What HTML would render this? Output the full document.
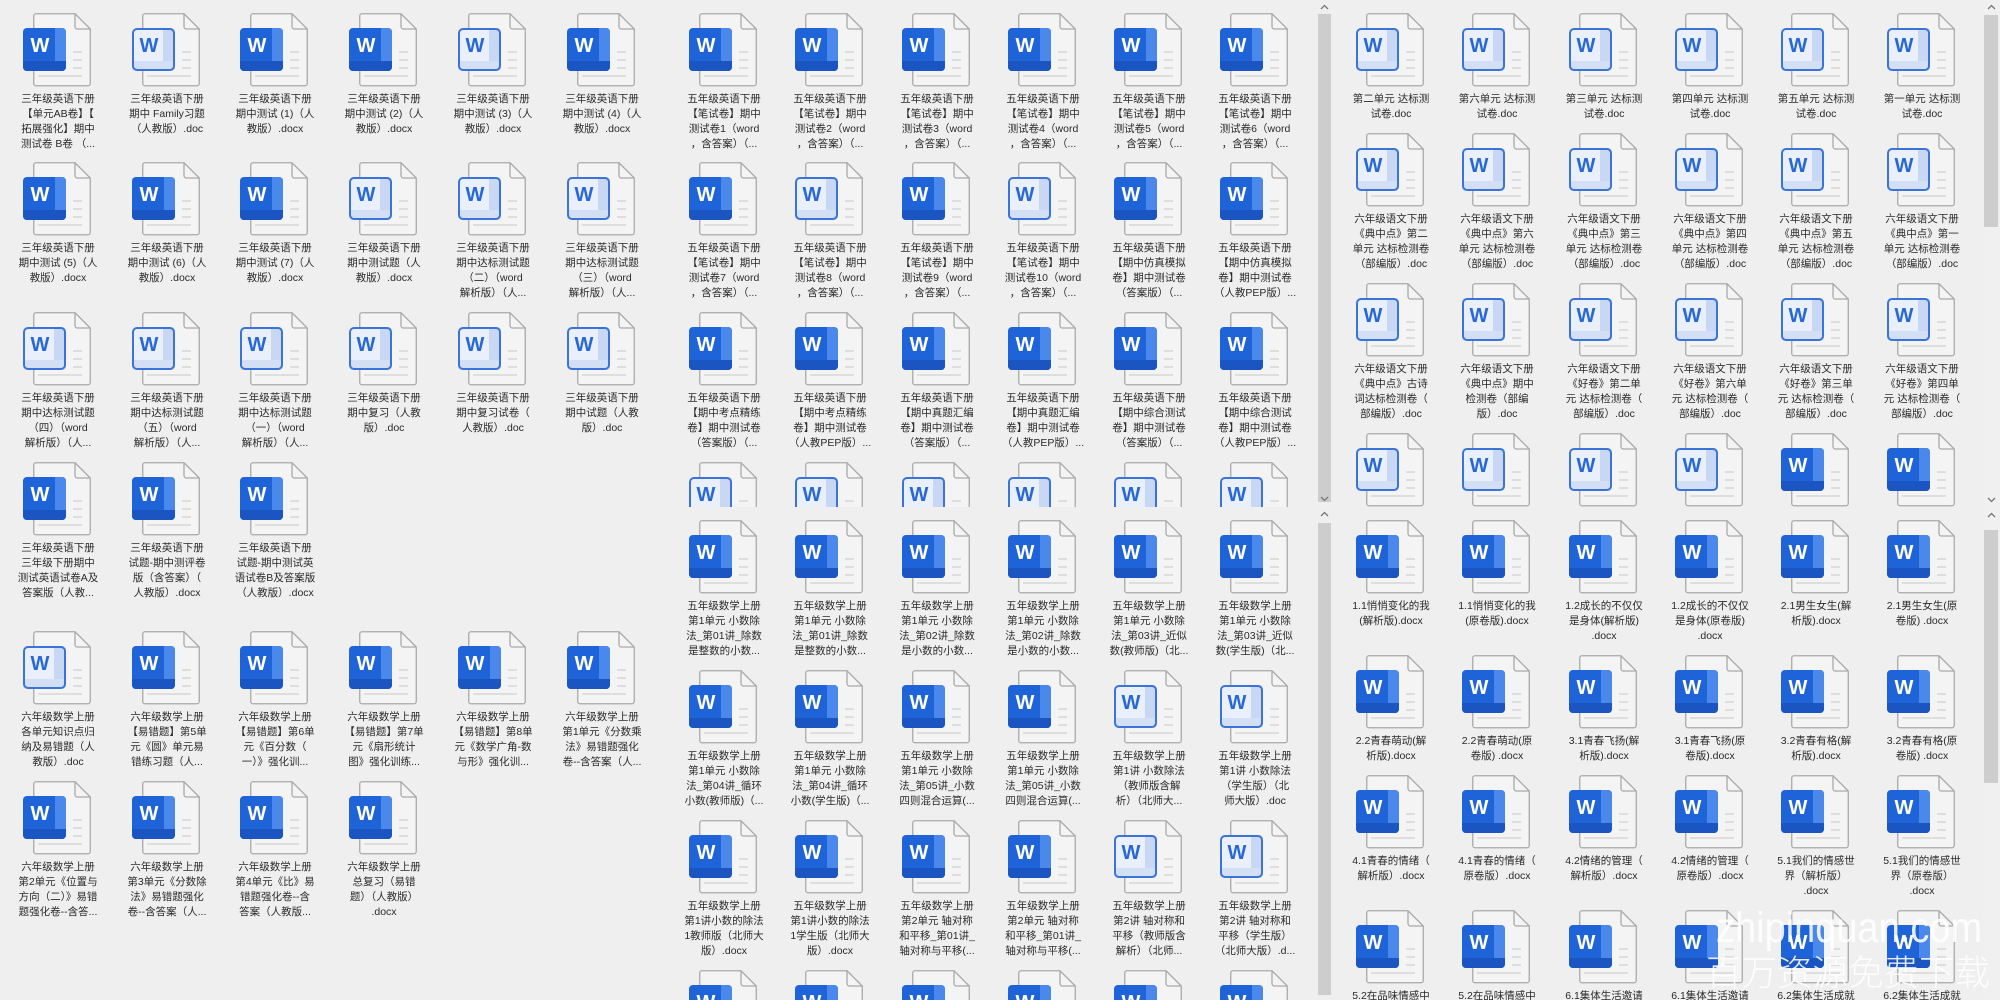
<!DOCTYPE html>
<html><head><meta charset="utf-8">
<style>
*{margin:0;padding:0;box-sizing:border-box}
html,body{width:2000px;height:1000px;overflow:hidden;background:#efefef}
body{position:relative;font-family:"Liberation Sans","Noto Sans CJK SC",sans-serif}
.c{position:absolute;overflow:hidden}
.i{position:absolute;width:90px}
.i svg{position:absolute;left:10px;top:0;width:70px;height:75px}
.i p{position:absolute;left:-10px;top:79px;width:110px;text-align:center;font-size:10.5px;line-height:15px;color:#2a2a2a;white-space:nowrap}
.sb{position:absolute;background:#cdcdcd}
.wm1{position:absolute;left:1716px;top:904px;font-size:38px;line-height:44px;color:rgba(255,255,255,.88);font-family:"Liberation Sans",sans-serif;white-space:nowrap;transform:scaleY(1.12);transform-origin:left top}
.wm2{position:absolute;left:1706px;top:950px;font-size:35.5px;line-height:42px;color:rgba(255,255,255,.88);font-family:"Noto Sans CJK SC",sans-serif;font-weight:300;white-space:nowrap}
</style></head><body>
<svg width="0" height="0" style="position:absolute">
<defs>
<clipPath id="cp"><rect x="0" y="15" width="43" height="43" rx="4"/></clipPath>
<symbol id="S" viewBox="0 0 70 75">
<path d="M10.75 3a2.25 2.25 0 0 1 2.25-2.25H52L67.25 16V70.5a2.25 2.25 0 0 1-2.25 2.25H13a2.25 2.25 0 0 1-2.25-2.25Z" fill="#f4f4f4" stroke="#a9a9a9" stroke-width="1.3"/>
<path d="M52 .75V13.5a2.5 2.5 0 0 0 2.5 2.5H67.25" fill="none" stroke="#a9a9a9" stroke-width="1.3"/>
<path d="M50 39h9M50 47h9M50 55h9M15 63h44" stroke="#d6d6d6" stroke-width="1.6"/>
<g clip-path="url(#cp)"><rect x="0" y="15" width="43" height="43" fill="#1f63d8"/><rect x="32" y="15" width="11" height="43" fill="#4a88ec"/><rect x="0" y="48" width="43" height="10" fill="#1a55c2"/></g>
<text x="17" y="39" font-family="Liberation Sans" font-weight="bold" font-size="20" fill="#fff" text-anchor="middle">W</text>
</symbol>
<symbol id="L" viewBox="0 0 70 75">
<path d="M10.75 3a2.25 2.25 0 0 1 2.25-2.25H52L67.25 16V70.5a2.25 2.25 0 0 1-2.25 2.25H13a2.25 2.25 0 0 1-2.25-2.25Z" fill="#f4f4f4" stroke="#a9a9a9" stroke-width="1.3"/>
<path d="M52 .75V13.5a2.5 2.5 0 0 0 2.5 2.5H67.25" fill="none" stroke="#a9a9a9" stroke-width="1.3"/>
<path d="M50 39h9M50 47h9M50 55h9M15 63h44" stroke="#d6d6d6" stroke-width="1.6"/>
<g clip-path="url(#cp)"><rect x="0" y="15" width="43" height="43" fill="#eaf0fb"/><rect x="31" y="15" width="12" height="43" fill="#c8d8f4"/><rect x="0" y="48" width="43" height="10" fill="#d3dff4"/></g>
<rect x="1" y="16" width="41" height="41" rx="4" fill="none" stroke="#3b74d8" stroke-width="2"/>
<text x="17" y="39" font-family="Liberation Sans" font-weight="bold" font-size="20" fill="#2767d6" text-anchor="middle">W</text>
</symbol>
</defs></svg>

<!-- Panel 1 -->
<div class="c" style="left:0;top:0;width:670px;height:1000px">
<div class="i" style="left:13px;top:13px"><svg><use href="#S"/></svg><p>三年级英语下册<br>【单元AB卷】【<br>拓展强化】期中<br>测试卷 B卷 （...</p></div>
<div class="i" style="left:122px;top:13px"><svg><use href="#L"/></svg><p>三年级英语下册<br>期中 Family习题<br>（人教版）.doc</p></div>
<div class="i" style="left:230px;top:13px"><svg><use href="#S"/></svg><p>三年级英语下册<br>期中测试 (1)（人<br>教版）.docx</p></div>
<div class="i" style="left:339px;top:13px"><svg><use href="#S"/></svg><p>三年级英语下册<br>期中测试 (2)（人<br>教版）.docx</p></div>
<div class="i" style="left:448px;top:13px"><svg><use href="#L"/></svg><p>三年级英语下册<br>期中测试 (3)（人<br>教版）.docx</p></div>
<div class="i" style="left:557px;top:13px"><svg><use href="#S"/></svg><p>三年级英语下册<br>期中测试 (4)（人<br>教版）.docx</p></div>

<div class="i" style="left:13px;top:162px"><svg><use href="#S"/></svg><p>三年级英语下册<br>期中测试 (5)（人<br>教版）.docx</p></div>
<div class="i" style="left:122px;top:162px"><svg><use href="#S"/></svg><p>三年级英语下册<br>期中测试 (6)（人<br>教版）.docx</p></div>
<div class="i" style="left:230px;top:162px"><svg><use href="#S"/></svg><p>三年级英语下册<br>期中测试 (7)（人<br>教版）.docx</p></div>
<div class="i" style="left:339px;top:162px"><svg><use href="#L"/></svg><p>三年级英语下册<br>期中测试题（人<br>教版）.docx</p></div>
<div class="i" style="left:448px;top:162px"><svg><use href="#L"/></svg><p>三年级英语下册<br>期中达标测试题<br>（二）（word<br>解析版）（人...</p></div>
<div class="i" style="left:557px;top:162px"><svg><use href="#L"/></svg><p>三年级英语下册<br>期中达标测试题<br>（三）（word<br>解析版）（人...</p></div>

<div class="i" style="left:13px;top:312px"><svg><use href="#L"/></svg><p>三年级英语下册<br>期中达标测试题<br>（四）（word<br>解析版）（人...</p></div>
<div class="i" style="left:122px;top:312px"><svg><use href="#L"/></svg><p>三年级英语下册<br>期中达标测试题<br>（五）（word<br>解析版）（人...</p></div>
<div class="i" style="left:230px;top:312px"><svg><use href="#L"/></svg><p>三年级英语下册<br>期中达标测试题<br>（一）（word<br>解析版）（人...</p></div>
<div class="i" style="left:339px;top:312px"><svg><use href="#L"/></svg><p>三年级英语下册<br>期中复习（人教<br>版）.doc</p></div>
<div class="i" style="left:448px;top:312px"><svg><use href="#L"/></svg><p>三年级英语下册<br>期中复习试卷（<br>人教版）.doc</p></div>
<div class="i" style="left:557px;top:312px"><svg><use href="#L"/></svg><p>三年级英语下册<br>期中试题（人教<br>版）.doc</p></div>

<div class="i" style="left:13px;top:462px"><svg><use href="#S"/></svg><p>三年级英语下册<br>三年级下册期中<br>测试英语试卷A及<br>答案版（人教...</p></div>
<div class="i" style="left:122px;top:462px"><svg><use href="#S"/></svg><p>三年级英语下册<br>试题-期中测评卷<br>版（含答案）（<br>人教版）.docx</p></div>
<div class="i" style="left:230px;top:462px"><svg><use href="#S"/></svg><p>三年级英语下册<br>试题-期中测试英<br>语试卷B及答案版<br>（人教版）.docx</p></div>

<div class="i" style="left:13px;top:631px"><svg><use href="#L"/></svg><p>六年级数学上册<br>各单元知识点归<br>纳及易错题（人<br>教版）.doc</p></div>
<div class="i" style="left:122px;top:631px"><svg><use href="#S"/></svg><p>六年级数学上册<br>【易错题】第5单<br>元《圆》单元易<br>错练习题（人...</p></div>
<div class="i" style="left:230px;top:631px"><svg><use href="#S"/></svg><p>六年级数学上册<br>【易错题】第6单<br>元《百分数（<br>一）》强化训...</p></div>
<div class="i" style="left:339px;top:631px"><svg><use href="#S"/></svg><p>六年级数学上册<br>【易错题】第7单<br>元《扇形统计<br>图》强化训练...</p></div>
<div class="i" style="left:448px;top:631px"><svg><use href="#S"/></svg><p>六年级数学上册<br>【易错题】第8单<br>元《数学广角-数<br>与形》强化训...</p></div>
<div class="i" style="left:557px;top:631px"><svg><use href="#S"/></svg><p>六年级数学上册<br>第1单元《分数乘<br>法》易错题强化<br>卷--含答案（人...</p></div>

<div class="i" style="left:13px;top:781px"><svg><use href="#S"/></svg><p>六年级数学上册<br>第2单元《位置与<br>方向（二）》易错<br>题强化卷--含答...</p></div>
<div class="i" style="left:122px;top:781px"><svg><use href="#S"/></svg><p>六年级数学上册<br>第3单元《分数除<br>法》易错题强化<br>卷--含答案（人...</p></div>
<div class="i" style="left:230px;top:781px"><svg><use href="#S"/></svg><p>六年级数学上册<br>第4单元《比》易<br>错题强化卷--含<br>答案（人教版...</p></div>
<div class="i" style="left:339px;top:781px"><svg><use href="#S"/></svg><p>六年级数学上册<br>总复习（易错<br>题）（人教版）<br>.docx</p></div>
</div>

<!-- Panel 2 top -->
<div class="c" style="left:0;top:0;width:1318px;height:507px">
<div class="i" style="left:679px;top:13px"><svg><use href="#S"/></svg><p>五年级英语下册<br>【笔试卷】期中<br>测试卷1（word<br>，含答案）（...</p></div>
<div class="i" style="left:785px;top:13px"><svg><use href="#S"/></svg><p>五年级英语下册<br>【笔试卷】期中<br>测试卷2（word<br>，含答案）（...</p></div>
<div class="i" style="left:892px;top:13px"><svg><use href="#S"/></svg><p>五年级英语下册<br>【笔试卷】期中<br>测试卷3（word<br>，含答案）（...</p></div>
<div class="i" style="left:998px;top:13px"><svg><use href="#S"/></svg><p>五年级英语下册<br>【笔试卷】期中<br>测试卷4（word<br>，含答案）（...</p></div>
<div class="i" style="left:1104px;top:13px"><svg><use href="#S"/></svg><p>五年级英语下册<br>【笔试卷】期中<br>测试卷5（word<br>，含答案）（...</p></div>
<div class="i" style="left:1210px;top:13px"><svg><use href="#S"/></svg><p>五年级英语下册<br>【笔试卷】期中<br>测试卷6（word<br>，含答案）（...</p></div>

<div class="i" style="left:679px;top:162px"><svg><use href="#S"/></svg><p>五年级英语下册<br>【笔试卷】期中<br>测试卷7（word<br>，含答案）（...</p></div>
<div class="i" style="left:785px;top:162px"><svg><use href="#L"/></svg><p>五年级英语下册<br>【笔试卷】期中<br>测试卷8（word<br>，含答案）（...</p></div>
<div class="i" style="left:892px;top:162px"><svg><use href="#S"/></svg><p>五年级英语下册<br>【笔试卷】期中<br>测试卷9（word<br>，含答案）（...</p></div>
<div class="i" style="left:998px;top:162px"><svg><use href="#L"/></svg><p>五年级英语下册<br>【笔试卷】期中<br>测试卷10（word<br>，含答案）（...</p></div>
<div class="i" style="left:1104px;top:162px"><svg><use href="#S"/></svg><p>五年级英语下册<br>【期中仿真模拟<br>卷】期中测试卷<br>（答案版）（...</p></div>
<div class="i" style="left:1210px;top:162px"><svg><use href="#S"/></svg><p>五年级英语下册<br>【期中仿真模拟<br>卷】期中测试卷<br>（人教PEP版）...</p></div>

<div class="i" style="left:679px;top:312px"><svg><use href="#S"/></svg><p>五年级英语下册<br>【期中考点精练<br>卷】期中测试卷<br>（答案版）（...</p></div>
<div class="i" style="left:785px;top:312px"><svg><use href="#S"/></svg><p>五年级英语下册<br>【期中考点精练<br>卷】期中测试卷<br>（人教PEP版）...</p></div>
<div class="i" style="left:892px;top:312px"><svg><use href="#S"/></svg><p>五年级英语下册<br>【期中真题汇编<br>卷】期中测试卷<br>（答案版）（...</p></div>
<div class="i" style="left:998px;top:312px"><svg><use href="#S"/></svg><p>五年级英语下册<br>【期中真题汇编<br>卷】期中测试卷<br>（人教PEP版）...</p></div>
<div class="i" style="left:1104px;top:312px"><svg><use href="#S"/></svg><p>五年级英语下册<br>【期中综合测试<br>卷】期中测试卷<br>（答案版）（...</p></div>
<div class="i" style="left:1210px;top:312px"><svg><use href="#S"/></svg><p>五年级英语下册<br>【期中综合测试<br>卷】期中测试卷<br>（人教PEP版）...</p></div>

<div class="i" style="left:679px;top:462px"><svg><use href="#L"/></svg></div>
<div class="i" style="left:785px;top:462px"><svg><use href="#L"/></svg></div>
<div class="i" style="left:892px;top:462px"><svg><use href="#L"/></svg></div>
<div class="i" style="left:998px;top:462px"><svg><use href="#L"/></svg></div>
<div class="i" style="left:1104px;top:462px"><svg><use href="#L"/></svg></div>
<div class="i" style="left:1210px;top:462px"><svg><use href="#L"/></svg></div>
</div>

<!-- Panel 2 bottom -->
<div class="c" style="left:670px;top:507px;width:648px;height:493px">
<div style="position:absolute;left:-670px;top:-507px;width:1318px;height:1000px">
<div class="i" style="left:679px;top:520px"><svg><use href="#S"/></svg><p>五年级数学上册<br>第1单元 小数除<br>法_第01讲_除数<br>是整数的小数...</p></div>
<div class="i" style="left:785px;top:520px"><svg><use href="#S"/></svg><p>五年级数学上册<br>第1单元 小数除<br>法_第01讲_除数<br>是整数的小数...</p></div>
<div class="i" style="left:892px;top:520px"><svg><use href="#S"/></svg><p>五年级数学上册<br>第1单元 小数除<br>法_第02讲_除数<br>是小数的小数...</p></div>
<div class="i" style="left:998px;top:520px"><svg><use href="#S"/></svg><p>五年级数学上册<br>第1单元 小数除<br>法_第02讲_除数<br>是小数的小数...</p></div>
<div class="i" style="left:1104px;top:520px"><svg><use href="#S"/></svg><p>五年级数学上册<br>第1单元 小数除<br>法_第03讲_近似<br>数(教师版)（北...</p></div>
<div class="i" style="left:1210px;top:520px"><svg><use href="#S"/></svg><p>五年级数学上册<br>第1单元 小数除<br>法_第03讲_近似<br>数(学生版)（北...</p></div>

<div class="i" style="left:679px;top:670px"><svg><use href="#S"/></svg><p>五年级数学上册<br>第1单元 小数除<br>法_第04讲_循环<br>小数(教师版)（...</p></div>
<div class="i" style="left:785px;top:670px"><svg><use href="#S"/></svg><p>五年级数学上册<br>第1单元 小数除<br>法_第04讲_循环<br>小数(学生版)（...</p></div>
<div class="i" style="left:892px;top:670px"><svg><use href="#S"/></svg><p>五年级数学上册<br>第1单元 小数除<br>法_第05讲_小数<br>四则混合运算(...</p></div>
<div class="i" style="left:998px;top:670px"><svg><use href="#S"/></svg><p>五年级数学上册<br>第1单元 小数除<br>法_第05讲_小数<br>四则混合运算(...</p></div>
<div class="i" style="left:1104px;top:670px"><svg><use href="#L"/></svg><p>五年级数学上册<br>第1讲 小数除法<br>（教师版含解<br>析）（北师大...</p></div>
<div class="i" style="left:1210px;top:670px"><svg><use href="#L"/></svg><p>五年级数学上册<br>第1讲 小数除法<br>（学生版）（北<br>师大版）.doc</p></div>

<div class="i" style="left:679px;top:820px"><svg><use href="#S"/></svg><p>五年级数学上册<br>第1讲小数的除法<br>1教师版（北师大<br>版）.docx</p></div>
<div class="i" style="left:785px;top:820px"><svg><use href="#S"/></svg><p>五年级数学上册<br>第1讲小数的除法<br>1学生版（北师大<br>版）.docx</p></div>
<div class="i" style="left:892px;top:820px"><svg><use href="#S"/></svg><p>五年级数学上册<br>第2单元 轴对称<br>和平移_第01讲_<br>轴对称与平移(...</p></div>
<div class="i" style="left:998px;top:820px"><svg><use href="#S"/></svg><p>五年级数学上册<br>第2单元 轴对称<br>和平移_第01讲_<br>轴对称与平移(...</p></div>
<div class="i" style="left:1104px;top:820px"><svg><use href="#L"/></svg><p>五年级数学上册<br>第2讲 轴对称和<br>平移（教师版含<br>解析）（北师...</p></div>
<div class="i" style="left:1210px;top:820px"><svg><use href="#L"/></svg><p>五年级数学上册<br>第2讲 轴对称和<br>平移（学生版）<br>（北师大版）.d...</p></div>

<div class="i" style="left:679px;top:970px"><svg><use href="#S"/></svg></div>
<div class="i" style="left:785px;top:970px"><svg><use href="#S"/></svg></div>
<div class="i" style="left:892px;top:970px"><svg><use href="#S"/></svg></div>
<div class="i" style="left:998px;top:970px"><svg><use href="#S"/></svg></div>
<div class="i" style="left:1104px;top:970px"><svg><use href="#S"/></svg></div>
<div class="i" style="left:1210px;top:970px"><svg><use href="#S"/></svg></div>
</div></div>

<!-- Panel 2 scrollbar -->
<div class="sb" style="left:1318px;top:14px;width:13px;height:488px"></div>
<svg style="position:absolute;left:1318px;top:2px" width="13" height="10"><path d="M3 7l3.5-3.5L10 7" fill="none" stroke="#777" stroke-width="1.3"/></svg>
<svg style="position:absolute;left:1318px;top:494px" width="13" height="10"><path d="M3 3l3.5 3.5L10 3" fill="none" stroke="#777" stroke-width="1.3"/></svg>
<svg style="position:absolute;left:1318px;top:509px" width="13" height="10"><path d="M3 7l3.5-3.5L10 7" fill="none" stroke="#777" stroke-width="1.3"/></svg>
<div class="sb" style="left:1318px;top:523px;width:13px;height:472px"></div>

<!-- Panel 3 top -->
<div class="c" style="left:1333px;top:0;width:650px;height:507px">
<div style="position:absolute;left:-1333px;top:0;width:2000px;height:1000px">
<div class="i" style="left:1346px;top:13px"><svg><use href="#L"/></svg><p>第二单元 达标测<br>试卷.doc</p></div>
<div class="i" style="left:1452px;top:13px"><svg><use href="#L"/></svg><p>第六单元 达标测<br>试卷.doc</p></div>
<div class="i" style="left:1559px;top:13px"><svg><use href="#L"/></svg><p>第三单元 达标测<br>试卷.doc</p></div>
<div class="i" style="left:1665px;top:13px"><svg><use href="#L"/></svg><p>第四单元 达标测<br>试卷.doc</p></div>
<div class="i" style="left:1771px;top:13px"><svg><use href="#L"/></svg><p>第五单元 达标测<br>试卷.doc</p></div>
<div class="i" style="left:1877px;top:13px"><svg><use href="#L"/></svg><p>第一单元 达标测<br>试卷.doc</p></div>

<div class="i" style="left:1346px;top:133px"><svg><use href="#L"/></svg><p>六年级语文下册<br>《典中点》第二<br>单元 达标检测卷<br>（部编版）.doc</p></div>
<div class="i" style="left:1452px;top:133px"><svg><use href="#L"/></svg><p>六年级语文下册<br>《典中点》第六<br>单元 达标检测卷<br>（部编版）.doc</p></div>
<div class="i" style="left:1559px;top:133px"><svg><use href="#L"/></svg><p>六年级语文下册<br>《典中点》第三<br>单元 达标检测卷<br>（部编版）.doc</p></div>
<div class="i" style="left:1665px;top:133px"><svg><use href="#L"/></svg><p>六年级语文下册<br>《典中点》第四<br>单元 达标检测卷<br>（部编版）.doc</p></div>
<div class="i" style="left:1771px;top:133px"><svg><use href="#L"/></svg><p>六年级语文下册<br>《典中点》第五<br>单元 达标检测卷<br>（部编版）.doc</p></div>
<div class="i" style="left:1877px;top:133px"><svg><use href="#L"/></svg><p>六年级语文下册<br>《典中点》第一<br>单元 达标检测卷<br>（部编版）.doc</p></div>

<div class="i" style="left:1346px;top:283px"><svg><use href="#L"/></svg><p>六年级语文下册<br>《典中点》古诗<br>词达标检测卷（<br>部编版）.doc</p></div>
<div class="i" style="left:1452px;top:283px"><svg><use href="#L"/></svg><p>六年级语文下册<br>《典中点》期中<br>检测卷（部编<br>版）.doc</p></div>
<div class="i" style="left:1559px;top:283px"><svg><use href="#L"/></svg><p>六年级语文下册<br>《好卷》第二单<br>元 达标检测卷（<br>部编版）.doc</p></div>
<div class="i" style="left:1665px;top:283px"><svg><use href="#L"/></svg><p>六年级语文下册<br>《好卷》第六单<br>元 达标检测卷（<br>部编版）.doc</p></div>
<div class="i" style="left:1771px;top:283px"><svg><use href="#L"/></svg><p>六年级语文下册<br>《好卷》第三单<br>元 达标检测卷（<br>部编版）.doc</p></div>
<div class="i" style="left:1877px;top:283px"><svg><use href="#L"/></svg><p>六年级语文下册<br>《好卷》第四单<br>元 达标检测卷（<br>部编版）.doc</p></div>

<div class="i" style="left:1346px;top:433px"><svg><use href="#L"/></svg></div>
<div class="i" style="left:1452px;top:433px"><svg><use href="#L"/></svg></div>
<div class="i" style="left:1559px;top:433px"><svg><use href="#L"/></svg></div>
<div class="i" style="left:1665px;top:433px"><svg><use href="#L"/></svg></div>
<div class="i" style="left:1771px;top:433px"><svg><use href="#S"/></svg></div>
<div class="i" style="left:1877px;top:433px"><svg><use href="#S"/></svg></div>
</div></div>

<!-- Panel 3 bottom -->
<div class="c" style="left:1333px;top:507px;width:650px;height:493px">
<div style="position:absolute;left:-1333px;top:-507px;width:2000px;height:1000px">
<div class="i" style="left:1346px;top:520px"><svg><use href="#S"/></svg><p>1.1悄悄变化的我<br>(解析版).docx</p></div>
<div class="i" style="left:1452px;top:520px"><svg><use href="#S"/></svg><p>1.1悄悄变化的我<br>(原卷版).docx</p></div>
<div class="i" style="left:1559px;top:520px"><svg><use href="#S"/></svg><p>1.2成长的不仅仅<br>是身体(解析版)<br>.docx</p></div>
<div class="i" style="left:1665px;top:520px"><svg><use href="#S"/></svg><p>1.2成长的不仅仅<br>是身体(原卷版)<br>.docx</p></div>
<div class="i" style="left:1771px;top:520px"><svg><use href="#S"/></svg><p>2.1男生女生(解<br>析版).docx</p></div>
<div class="i" style="left:1877px;top:520px"><svg><use href="#S"/></svg><p>2.1男生女生(原<br>卷版) .docx</p></div>

<div class="i" style="left:1346px;top:655px"><svg><use href="#S"/></svg><p>2.2青春萌动(解<br>析版).docx</p></div>
<div class="i" style="left:1452px;top:655px"><svg><use href="#S"/></svg><p>2.2青春萌动(原<br>卷版) .docx</p></div>
<div class="i" style="left:1559px;top:655px"><svg><use href="#S"/></svg><p>3.1青春飞扬(解<br>析版).docx</p></div>
<div class="i" style="left:1665px;top:655px"><svg><use href="#S"/></svg><p>3.1青春飞扬(原<br>卷版).docx</p></div>
<div class="i" style="left:1771px;top:655px"><svg><use href="#S"/></svg><p>3.2青春有格(解<br>析版).docx</p></div>
<div class="i" style="left:1877px;top:655px"><svg><use href="#S"/></svg><p>3.2青春有格(原<br>卷版) .docx</p></div>

<div class="i" style="left:1346px;top:775px"><svg><use href="#S"/></svg><p>4.1青春的情绪（<br>解析版）.docx</p></div>
<div class="i" style="left:1452px;top:775px"><svg><use href="#S"/></svg><p>4.1青春的情绪（<br>原卷版）.docx</p></div>
<div class="i" style="left:1559px;top:775px"><svg><use href="#S"/></svg><p>4.2情绪的管理（<br>解析版）.docx</p></div>
<div class="i" style="left:1665px;top:775px"><svg><use href="#S"/></svg><p>4.2情绪的管理（<br>原卷版）.docx</p></div>
<div class="i" style="left:1771px;top:775px"><svg><use href="#S"/></svg><p>5.1我们的情感世<br>界（解析版）<br>.docx</p></div>
<div class="i" style="left:1877px;top:775px"><svg><use href="#S"/></svg><p>5.1我们的情感世<br>界（原卷版）<br>.docx</p></div>

<div class="i" style="left:1346px;top:910px"><svg><use href="#S"/></svg><p>5.2在品味情感中</p></div>
<div class="i" style="left:1452px;top:910px"><svg><use href="#S"/></svg><p>5.2在品味情感中</p></div>
<div class="i" style="left:1559px;top:910px"><svg><use href="#S"/></svg><p>6.1集体生活邀请</p></div>
<div class="i" style="left:1665px;top:910px"><svg><use href="#S"/></svg><p>6.1集体生活邀请</p></div>
<div class="i" style="left:1771px;top:910px"><svg><use href="#S"/></svg><p>6.2集体生活成就</p></div>
<div class="i" style="left:1877px;top:910px"><svg><use href="#S"/></svg><p>6.2集体生活成就</p></div>
</div></div>

<!-- Panel 3 scrollbar -->
<div style="position:absolute;left:1983px;top:0;width:17px;height:1000px;background:#f0f0f0"></div>
<div class="sb" style="left:1984px;top:15px;width:14px;height:212px"></div>
<svg style="position:absolute;left:1985px;top:2px" width="13" height="10"><path d="M3 7l3.5-3.5L10 7" fill="none" stroke="#777" stroke-width="1.3"/></svg>
<svg style="position:absolute;left:1985px;top:495px" width="13" height="10"><path d="M3 3l3.5 3.5L10 3" fill="none" stroke="#777" stroke-width="1.3"/></svg>
<svg style="position:absolute;left:1985px;top:510px" width="13" height="10"><path d="M3 7l3.5-3.5L10 7" fill="none" stroke="#777" stroke-width="1.3"/></svg>
<div class="sb" style="left:1984px;top:530px;width:14px;height:253px"></div>

<div class="wm1">zhipinquan.com</div>
<div class="wm2">百万资源免费下载</div>
</body></html>
